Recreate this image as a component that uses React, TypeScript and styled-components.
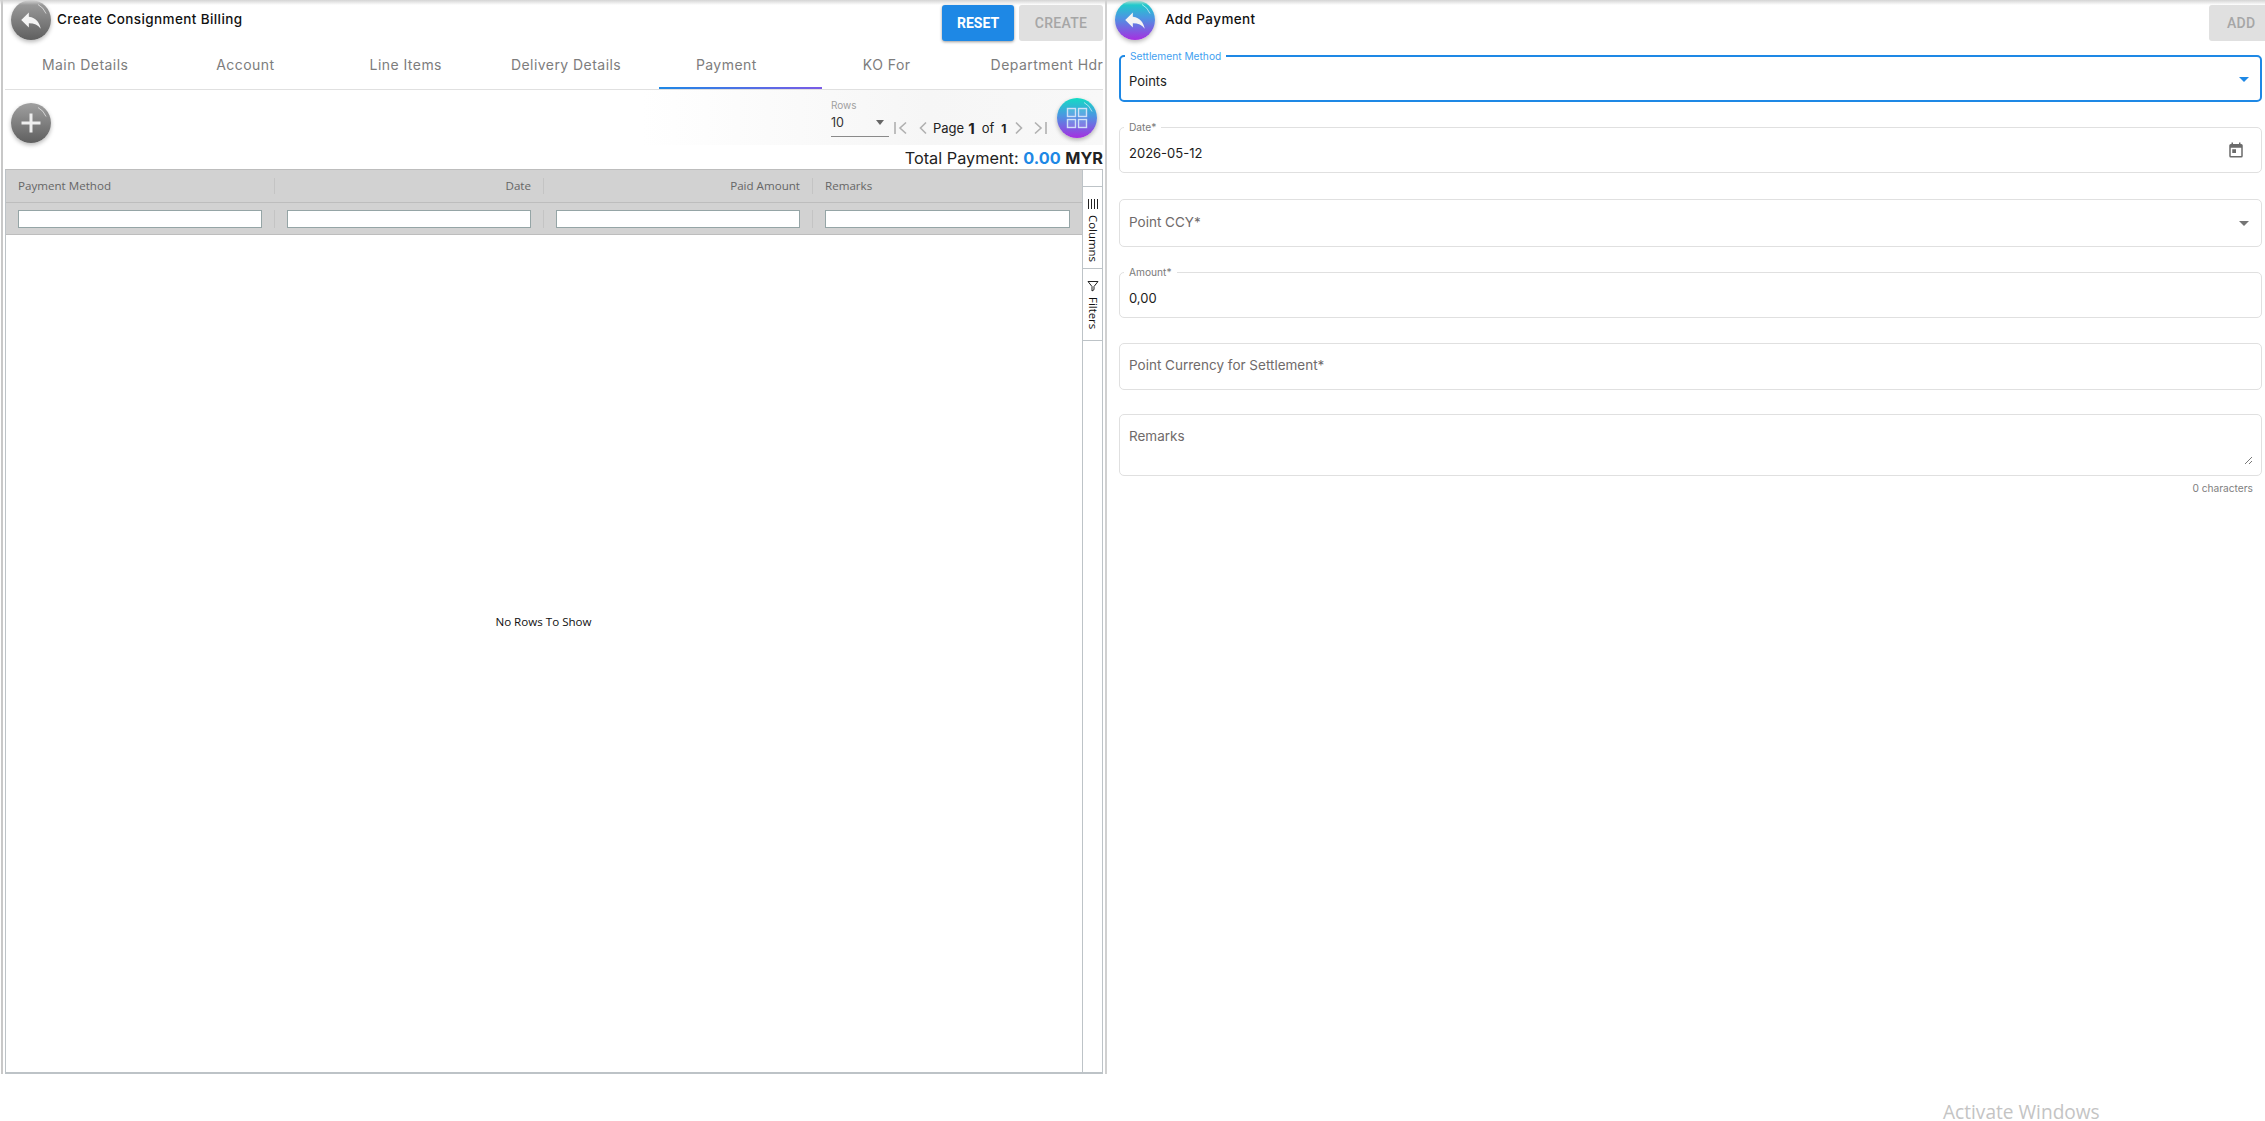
import React from 'react';
import styled, { createGlobalStyle, css } from 'styled-components';

const GlobalStyle = createGlobalStyle`
    html, body {
        margin: 0;
        padding: 0;
        background: #ffffff;
    }
    body {
        font-family: "Inter", "Noto Sans", sans-serif;
        overflow: hidden;
    }
`

const Page = styled.div`
    position: relative;
    display: flex;
    width: 2265px;
    height: 1121px;
    overflow: hidden;
    background: #ffffff;
    &::before {
        content: '';
        position: absolute;
        top: 0;
        left: 0;
        right: 0;
        height: 5px;
        background: linear-gradient(#d4d4d4, rgba(255, 255, 255, 0));
        z-index: 3;
    }
`

const LeftPanel = styled.section`
    box-sizing: border-box;
    flex: none;
    width: 1106px;
    height: 1074px;
    margin-left: 1px;
    padding-left: 2px;
    padding-right: 2px;
    border-left: 2px solid #c8c8c8;
    border-right: 2px solid #d0d0d0;
    display: flex;
    flex-direction: column;
`

const RightPanel = styled.section`
    flex: 1;
    box-sizing: border-box;
    padding-left: 8px;
    padding-right: 3px;
    display: flex;
    flex-direction: column;
`

const TitleBar = styled.div`
    display: flex;
    align-items: flex-start;
    height: 48px;
    flex: none;
`

const RoundButton = styled.div<{ $variant: 'gray' | 'color' }>`
    position: relative;
    flex: none;
    width: 40px;
    height: 40px;
    border-radius: 50%;
    display: flex;
    align-items: center;
    justify-content: center;
    box-shadow: 0 2px 4px rgba(0, 0, 0, 0.28);
    ${(p) => p.$variant === 'gray'
        ? css`background: linear-gradient(#a0a0a0, #5f5f5f);`
        : css`background: linear-gradient(#12dcc4 0%, #4c95e2 45%, #a62fe0 100%);`}
`

const LeftBack = styled(RoundButton)`
    margin-left: 6px;
`

const Shine = styled.svg`
    position: absolute;
    inset: 0;
    width: 40px;
    height: 40px;
`

const Title = styled.h1`
    margin: 0;
    font-size: 13.5px;
    letter-spacing: 0.4px;
    line-height: 38px;
    font-weight: 500;
    color: #111111;
    white-space: nowrap;
`

const LeftTitle = styled(Title)`
    margin-left: 6px;
    flex: 1;
`

const RightTitle = styled(Title)`
    margin-left: 10px;
    flex: 1;
`

const ActionButton = styled.button<{ $primary?: boolean }>`
    box-sizing: border-box;
    height: 36px;
    margin-top: 5px;
    border: 0;
    border-radius: 3px;
    padding: 0;
    font-family: "Roboto", sans-serif;
    font-size: 14px;
    font-weight: 500;
    ${(p) => p.$primary
        ? css`
            background: #1e88e5;
            color: #ffffff;
            width: 72px;
            font-weight: 700;
            box-shadow: 0 1px 3px rgba(0, 0, 0, 0.4);
        `
        : css`
            background: #e0e0e0;
            color: #a6a6a6;
            width: 84px;
            letter-spacing: 0.3px;
        `}
`

const ButtonRow = styled.div`
    display: flex;
    gap: 5px;
`

const AddButton = styled(ActionButton)`
    width: 56px;
    margin-right: -3px;
    border-radius: 3px 0 0 3px;
    text-align: left;
    padding-left: 18px;
`

const TabStrip = styled.nav`
    position: relative;
    display: flex;
    height: 41px;
    flex: none;
    overflow: hidden;
    border-bottom: 1px solid #e0e0e0;
    box-sizing: content-box;
`

const Tab = styled.div`
    flex: none;
    width: 160.3px;
    text-align: center;
    font-size: 14px;
    letter-spacing: 0.45px;
    line-height: 34px;
    color: #7d7d7d;
    white-space: nowrap;
`

const TabIndicator = styled.div`
    position: absolute;
    left: 654px;
    bottom: 0;
    width: 163px;
    height: 2.5px;
    background: linear-gradient(90deg, #1e88e5, #7a5be6);
`

const Toolbar = styled.div`
    display: flex;
    align-items: flex-start;
    height: 55px;
    flex: none;
    background: linear-gradient(90deg, #ffffff 58%, #f6f6f6 84%, #f8f8f8);
`

const AddCircle = styled(RoundButton)`
    margin-top: 13px;
    margin-left: 6px;
    margin-right: auto;
`

const RowsPicker = styled.div`
    box-sizing: border-box;
    position: relative;
    width: 58px;
    height: 39px;
    margin-top: 8px;
    border-bottom: 1px solid #8a8a8a;
`

const RowsLabel = styled.div`
    font-size: 10px;
    line-height: 14px;
    color: #a0a0a0;
`

const RowsValue = styled.div`
    font-size: 12.5px;
    line-height: 22px;
    color: #333333;
`

const RowsArrow = styled.span`
    position: absolute;
    right: 5px;
    top: 22px;
    border-left: 4.5px solid transparent;
    border-right: 4.5px solid transparent;
    border-top: 5px solid #666666;
`

const Pager = styled.div`
    display: flex;
    align-items: center;
    height: 20px;
    margin-top: 28px;
    margin-left: 5px;
    width: 157px;
    font-size: 13px;
    color: #222222;
`

const PagerIcon = styled.svg<{ $gap: number }>`
    flex: none;
    margin-right: ${(p) => p.$gap}px;
`

const PagerWord = styled.span<{ $gap: number }>`
    margin-right: ${(p) => p.$gap}px;
`

const PagerNumber = styled.b<{ $big?: boolean; $gap: number }>`
    font-size: ${(p) => (p.$big ? 15 : 12)}px;
    font-weight: 700;
    margin-right: ${(p) => p.$gap}px;
`

const GridToggle = styled(RoundButton)`
    margin-top: 8px;
    margin-left: 6px;
    margin-right: 6px;
`

const TotalRow = styled.div`
    flex: none;
    height: 24px;
    line-height: 26px;
    text-align: right;
    font-size: 16.3px;
    color: #222222;
    white-space: nowrap;
`

const TotalValue = styled.b`
    color: #1e88e5;
    font-weight: 700;
`

const TotalCurrency = styled.b`
    font-weight: 700;
    color: #222222;
`

const Grid = styled.div`
    position: relative;
    flex: 1;
    display: flex;
    box-sizing: border-box;
    border: 1px solid #bdc3c7;
    border-bottom-width: 2px;
    border-top: 1px solid #bdbdbd;
    font-family: "Open Sans", "Noto Sans", sans-serif;
`

const GridMain = styled.div`
    flex: 1;
    min-width: 0;
    display: flex;
    flex-direction: column;
`

const GridHead = styled.div`
    background: #d2d2d2;
    border-bottom: 1px solid #bdbdbd;
`

const HeadRow = styled.div<{ $filter?: boolean }>`
    display: grid;
    grid-template-columns: repeat(4, 269px);
    height: ${(p) => (p.$filter ? 31 : 32)}px;
    align-items: center;
    ${(p) => !p.$filter && css`border-bottom: 1px solid #bdbdbd;`}
`

const HeadCell = styled.div<{ $right?: boolean }>`
    box-sizing: border-box;
    height: 16px;
    line-height: 16px;
    padding: 0 12px;
    font-size: 11.6px;
    font-weight: 500;
    color: #666666;
    text-align: ${(p) => (p.$right ? 'right' : 'left')};
    border-right: 1px solid #c4c4c4;
    &:last-child {
        border-right: 0;
    }
`

const FilterCell = styled.div`
    box-sizing: border-box;
    height: 18px;
    padding: 0 12px;
    border-right: 1px solid #c4c4c4;
    &:last-child {
        border-right: 0;
    }
`

const FilterInput = styled.div`
    box-sizing: border-box;
    height: 18px;
    background: #ffffff;
    border: 1px solid #95a5a6;
`

const GridBody = styled.div`
    flex: 1;
    background: #ffffff;
`

const NoRows = styled.div`
    position: absolute;
    left: 0;
    right: 21px;
    top: 444px;
    text-align: center;
    font-size: 11.6px;
    line-height: 16px;
    color: #111111;
`

const SideBar = styled.aside`
    flex: none;
    width: 20px;
    box-sizing: border-box;
    border-left: 1px solid #bdc3c7;
    padding-top: 16px;
    background: #ffffff;
`

const SideTab = styled.div<{ $height: number }>`
    box-sizing: border-box;
    height: ${(p) => p.$height}px;
    border-top: 1px solid #bdc3c7;
    display: flex;
    flex-direction: column;
    align-items: center;
    padding-top: 11px;
    gap: 5px;
    &:last-child {
        border-bottom: 1px solid #bdc3c7;
    }
`

const SideLabel = styled.span`
    writing-mode: vertical-rl;
    font-size: 11.4px;
    line-height: 14px;
    color: #111111;
`

const FormStack = styled.div`
    display: flex;
    flex-direction: column;
    margin-top: 7px;
    margin-left: 4px;
`

const Field = styled.div<{ $height: number; $gap: number; $focused?: boolean }>`
    position: relative;
    box-sizing: border-box;
    height: ${(p) => p.$height}px;
    margin-bottom: ${(p) => p.$gap}px;
    border: ${(p) => (p.$focused ? '2px solid #1e88e5' : '1px solid #e0e0e0')};
    border-radius: 5px;
    display: flex;
    align-items: center;
    padding: 0 ${(p) => (p.$focused ? 8 : 9)}px;
`

const FieldText = styled.span<{ $placeholder?: boolean; $top?: boolean }>`
    font-size: ${(p) => (p.$placeholder ? 13.5 : 13)}px;
    color: ${(p) => (p.$placeholder ? '#6f6a6a' : '#1c1c1c')};
    ${(p) => p.$top && css`align-self: flex-start; margin-top: 13px;`}
    ${(p) => !p.$placeholder && css`padding-top: 5px;`}
    ${(p) => p.$placeholder && !p.$top && css`padding-bottom: 3px;`}
`

const FloatLabel = styled.span<{ $focused?: boolean }>`
    position: absolute;
    left: 4px;
    top: -7px;
    padding: 0 5px;
    background: #ffffff;
    font-size: 10.2px;
    line-height: 12px;
    color: ${(p) => (p.$focused ? '#3f9ff0' : '#7a7a7a')};
`

const TrailingIcon = styled.span`
    position: absolute;
    right: 16px;
    top: 50%;
    transform: translateY(-50%);
    display: flex;
`

const SelectArrow = styled.span<{ $focused?: boolean }>`
    position: absolute;
    right: ${(p) => (p.$focused ? 11 : 12)}px;
    top: 50%;
    margin-top: -2px;
    border-left: 5px solid transparent;
    border-right: 5px solid transparent;
    border-top: 5px solid ${(p) => (p.$focused ? '#1e88e5' : '#757575')};
`

const ResizeHandle = styled.svg`
    position: absolute;
    right: 8px;
    bottom: 10px;
`

const CharCount = styled.div`
    margin-top: -35px;
    padding-right: 9px;
    text-align: right;
    font-size: 10.2px;
    line-height: 14px;
    color: #808080;
`

const Watermark = styled.div`
    position: absolute;
    left: 1943px;
    top: 1103px;
    font-family: "Open Sans", "Noto Sans", sans-serif;
    font-size: 19.1px;
    line-height: 18px;
    color: #c4c4c4;
    white-space: nowrap;
`

const tabs = ['Main Details', 'Account', 'Line Items', 'Delivery Details', 'Payment', 'KO For', 'Department Hdr']

const columns = [
    { name: 'Payment Method', right: false },
    { name: 'Date', right: true },
    { name: 'Paid Amount', right: true },
    { name: 'Remarks', right: false },
]

const Highlight = () => (
    <Shine viewBox="0 0 40 40" fill="none">
        <path d="M27 4.5a17.5 17.5 0 0 1 8 9" stroke="rgba(255,255,255,0.75)" strokeWidth="0.8" />
    </Shine>
)

const BackIcon = () => (
    <svg width="26" height="26" viewBox="0 0 24 24" fill="#f4f4f4">
        <path d="M10 9V5l-7 7 7 7v-4.1c5 0 8.5 1.6 11 5.1-1-5-4-10-11-11z" />
    </svg>
)

const PlusIcon = () => (
    <svg width="22" height="22" viewBox="0 0 22 22" fill="#eeeeee">
        <path d="M9.5 1.5h3v8h8v3h-8v8h-3v-8h-8v-3h8z" />
    </svg>
)

const GridIcon = () => (
    <svg width="22" height="22" viewBox="0 0 22 22" fill="rgba(255,255,255,0.12)" stroke="#cfe0f7" strokeWidth="1.4">
        <rect x="1.5" y="1.5" width="8" height="8" />
        <rect x="12.5" y="1.5" width="8" height="8" />
        <rect x="1.5" y="12.5" width="8" height="8" />
        <rect x="12.5" y="12.5" width="8" height="8" />
    </svg>
)

const ChevronPath = ({ d, gap, width }: { d: string; gap: number; width: number }) => (
    <PagerIcon $gap={gap} width={width} height="14" viewBox={`0 0 ${width} 14`} fill="none" stroke="#b0b0b0" strokeWidth="1.6">
        <path d={d} />
    </PagerIcon>
)

const CalendarIcon = () => (
    <svg width="18" height="18" viewBox="0 0 24 24" fill="#6b6b6b">
        <path d="M19 4h-1V2h-2v2H8V2H6v2H5a2 2 0 0 0-2 2v14a2 2 0 0 0 2 2h14a2 2 0 0 0 2-2V6a2 2 0 0 0-2-2zm0 16H5V9h14v11zM7 11h5v5H7z" />
    </svg>
)

const ColumnsIcon = () => (
    <svg width="12" height="12" viewBox="0 0 12 12" stroke="#222222" strokeWidth="1" fill="none">
        <path d="M1.5 1v10M4.5 1v10M7.5 1v10M10.5 1v10" />
    </svg>
)

const FilterIcon = () => (
    <svg width="12" height="12" viewBox="0 0 12 12" stroke="#222222" strokeWidth="1" fill="none">
        <path d="M1 1.5h10L7 6.5v3.2l-2 1.3V6.5z" />
    </svg>
)

export default function App() {
    return (
        <Page>
            <GlobalStyle />
            <LeftPanel>
                <TitleBar>
                    <LeftBack $variant="gray">
                        <BackIcon />
                        <Highlight />
                    </LeftBack>
                    <LeftTitle>Create Consignment Billing</LeftTitle>
                    <ButtonRow>
                        <ActionButton $primary>RESET</ActionButton>
                        <ActionButton>CREATE</ActionButton>
                    </ButtonRow>
                </TitleBar>
                <TabStrip>
                    {tabs.map((tab) => (
                        <Tab key={tab}>{tab}</Tab>
                    ))}
                    <TabIndicator />
                </TabStrip>
                <Toolbar>
                    <AddCircle $variant="gray">
                        <PlusIcon />
                        <Highlight />
                    </AddCircle>
                    <RowsPicker>
                        <RowsLabel>Rows</RowsLabel>
                        <RowsValue>10</RowsValue>
                        <RowsArrow />
                    </RowsPicker>
                    <Pager>
                        <ChevronPath width={14} gap={11} d="M1 1v12M12 1.5L6 7l6 5.5" />
                        <ChevronPath width={8} gap={6} d="M7 1.5L1.5 7 7 12.5" />
                        <PagerWord $gap={4}>Page</PagerWord>
                        <PagerNumber $big $gap={7}>1</PagerNumber>
                        <PagerWord $gap={7}>of</PagerWord>
                        <PagerNumber $gap={9}>1</PagerNumber>
                        <ChevronPath width={8} gap={10} d="M1 1.5L6.5 7 1 12.5" />
                        <ChevronPath width={14} gap={0} d="M2 1.5L8 7l-6 5.5M13 1v12" />
                    </Pager>
                    <GridToggle $variant="color">
                        <GridIcon />
                        <Highlight />
                    </GridToggle>
                </Toolbar>
                <TotalRow>
                    Total Payment: <TotalValue>0.00</TotalValue> <TotalCurrency>MYR</TotalCurrency>
                </TotalRow>
                <Grid>
                    <GridMain>
                        <GridHead>
                            <HeadRow>
                                {columns.map((col) => (
                                    <HeadCell key={col.name} $right={col.right}>{col.name}</HeadCell>
                                ))}
                            </HeadRow>
                            <HeadRow $filter>
                                {columns.map((col) => (
                                    <FilterCell key={col.name}>
                                        <FilterInput />
                                    </FilterCell>
                                ))}
                            </HeadRow>
                        </GridHead>
                        <GridBody />
                    </GridMain>
                    <NoRows>No Rows To Show</NoRows>
                    <SideBar>
                        <SideTab $height={82}>
                            <ColumnsIcon />
                            <SideLabel>Columns</SideLabel>
                        </SideTab>
                        <SideTab $height={73}>
                            <FilterIcon />
                            <SideLabel>Filters</SideLabel>
                        </SideTab>
                    </SideBar>
                </Grid>
            </LeftPanel>
            <RightPanel>
                <TitleBar>
                    <RoundButton $variant="color">
                        <BackIcon />
                        <Highlight />
                    </RoundButton>
                    <RightTitle>Add Payment</RightTitle>
                    <AddButton>ADD</AddButton>
                </TitleBar>
                <FormStack>
                    <Field $height={47} $gap={25} $focused>
                        <FloatLabel $focused>Settlement Method</FloatLabel>
                        <FieldText>Points</FieldText>
                        <SelectArrow $focused />
                    </Field>
                    <Field $height={46} $gap={26}>
                        <FloatLabel>Date*</FloatLabel>
                        <FieldText>2026-05-12</FieldText>
                        <TrailingIcon><CalendarIcon /></TrailingIcon>
                    </Field>
                    <Field $height={48} $gap={25}>
                        <FieldText $placeholder>Point CCY*</FieldText>
                        <SelectArrow />
                    </Field>
                    <Field $height={46} $gap={25}>
                        <FloatLabel>Amount*</FloatLabel>
                        <FieldText>0,00</FieldText>
                    </Field>
                    <Field $height={47} $gap={24}>
                        <FieldText $placeholder>Point Currency for Settlement*</FieldText>
                    </Field>
                    <Field $height={62} $gap={40}>
                        <FieldText $placeholder $top>Remarks</FieldText>
                        <ResizeHandle width="9" height="9" viewBox="0 0 9 9" stroke="#555555" strokeWidth="0.8" fill="none">
                            <path d="M1 8l7-7M5 8l3-3" />
                        </ResizeHandle>
                    </Field>
                    <CharCount>0 characters</CharCount>
                </FormStack>
            </RightPanel>
            <Watermark>Activate Windows</Watermark>
        </Page>
    )
}
